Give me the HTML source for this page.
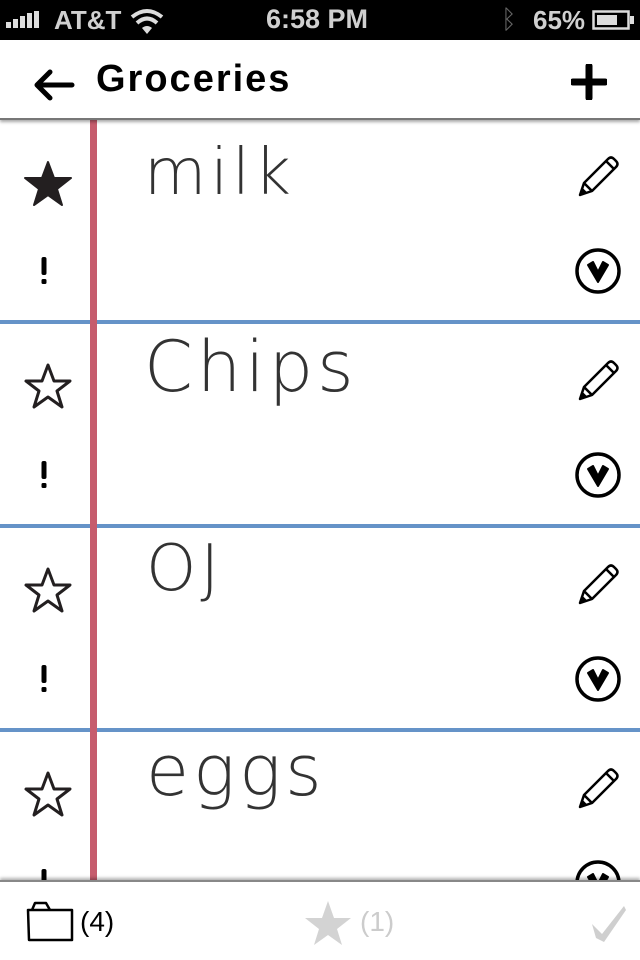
<!DOCTYPE html>
<html><head><meta charset="utf-8"><style>
*{margin:0;padding:0;box-sizing:border-box}
body{width:640px;height:960px;overflow:hidden;background:#fff;position:relative;font-family:"Liberation Sans",sans-serif}
.sb{position:absolute;left:0;top:0;width:640px;height:40px;background:#000;color:#d0d0d0;font-weight:bold;font-size:25px}
.hdr{position:absolute;left:0;top:40px;width:640px;height:80px;background:#fff;border-bottom:2px solid #777;box-shadow:0 2px 3px rgba(0,0,0,.35);z-index:3}
.red{position:absolute;left:90px;top:120px;width:7px;height:760px;background:#c65c6d;z-index:2}
.blue{position:absolute;left:0;width:640px;height:4px;background:#6593c8}
.hw{position:absolute;font-family:"DejaVu Sans",sans-serif;font-weight:200;color:#333;font-size:64px;letter-spacing:4px}
.ft{position:absolute;left:0;top:880px;width:640px;height:80px;background:#fff;border-top:2px solid #888;box-shadow:0 -2px 3px rgba(0,0,0,.3);z-index:4}
svg{position:absolute}
</style></head><body>
<div class="sb">
 <svg style="left:6px;top:11px" width="42" height="18"><rect x="0" y="11" width="5" height="6" fill="#ddd"/><rect x="7" y="8" width="5" height="9" fill="#ddd"/><rect x="14" y="5" width="5" height="12" fill="#ddd"/><rect x="21" y="2" width="5" height="15" fill="#ddd"/><rect x="28" y="0" width="5" height="17" fill="#ddd"/></svg>
 <div style="position:absolute;left:54px;top:5px;font-size:26px">AT&amp;T</div>
 <svg style="left:130px;top:8px" width="34" height="26"><path d="M2 9 Q17 -3 32 9" stroke="#ddd" stroke-width="4" fill="none"/><path d="M7 15 Q17 6 27 15" stroke="#ddd" stroke-width="4" fill="none"/><path d="M12 20 L17 26 L22 20 Q17 16 12 20Z" fill="#ddd"/></svg>
 <div style="position:absolute;left:266px;top:4px;font-size:27px">6:58 PM</div>
 <div style="position:absolute;left:501px;top:4px;color:#666;font-size:26px;font-weight:normal">ᛒ</div>
 <div style="position:absolute;left:533px;top:5px;font-size:26px">65%</div>
 <svg style="left:592px;top:10px" width="44" height="20"><rect x="1.5" y="1.5" width="35" height="17" fill="none" stroke="#ddd" stroke-width="2.5"/><rect x="5" y="5" width="20" height="10" fill="#ddd"/><rect x="38" y="6" width="4" height="8" fill="#ddd"/></svg>
</div>
<div class="hdr">
 <svg style="left:32px;top:28px" width="44" height="34"><path d="M40 17 L5 17 M18 4 L5 17 L18 30" stroke="#000" stroke-width="5" fill="none" stroke-linecap="round" stroke-linejoin="round"/></svg>
 <div style="position:absolute;left:96px;top:18px;font-size:38px;font-weight:bold;letter-spacing:2px">Groceries</div>
 <svg style="left:571px;top:24px" width="36" height="36"><path d="M18 2 V34 M2 18 H34" stroke="#000" stroke-width="7" stroke-linecap="round"/></svg>
</div>
<div class="red"></div>
<div class="blue" style="top:320px"></div>
<div class="blue" style="top:524px"></div>
<div class="blue" style="top:728px"></div>

<div class="hw" style="left:144px;top:136px">milk</div>
<div class="hw" style="left:144px;top:326px;font-size:70px">Chips</div>
<div class="hw" style="left:146px;top:532px">OJ</div>
<div class="hw" style="left:146px;top:730px;font-size:70px">eggs</div>

<svg width="640" height="960" style="left:0;top:0;z-index:1">
 <defs>
  <g id="pen"><path d="M2 40 L6 28 L30 4 Q33 1 36 4 L38 6 Q41 9 38 12 L14 36 Z M6 28 L14 36 M28 6 L36 14 M4 34 L8 38" fill="none" stroke="#000" stroke-width="2.5" stroke-linejoin="round"/><path d="M2 40 L4 34 L8 38Z" fill="#000"/></g>
  <g id="chev"><circle cx="0" cy="0" r="21" fill="none" stroke="#000" stroke-width="3.5"/><path d="M-10 -6 L0 11 L10 -6 L5 -9 L0 1 L-5 -9Z" fill="#000" stroke="#000" stroke-width="2" stroke-linejoin="round"/></g>
  <g id="bang"><rect x="-2.5" y="-13" width="5" height="18" rx="2" fill="#000"/><rect x="-2.5" y="9" width="5" height="5" rx="1.5" fill="#000"/></g>
 </defs>
 <path d="M48 162 L54 178 L71 178 L57 189 L62 205 L48 195 L34 205 L39 189 L25 178 L42 178Z" fill="#231f20" stroke="#231f20" stroke-width="2" stroke-linejoin="round"/>
 <g fill="none" stroke="#231f20" stroke-width="3" stroke-linejoin="round">
  <path d="M48 365 L54 381 L70 381 L57 391 L62 407 L48 397 L34 407 L39 391 L26 381 L42 381Z"/>
  <path d="M48 569 L54 585 L70 585 L57 595 L62 611 L48 601 L34 611 L39 595 L26 585 L42 585Z"/>
  <path d="M48 773 L54 789 L70 789 L57 799 L62 815 L48 805 L34 815 L39 799 L26 789 L42 789Z"/>
 </g>
 <use href="#bang" x="44" y="270"/><use href="#bang" x="44" y="474"/><use href="#bang" x="44" y="678"/><use href="#bang" x="44" y="882"/>
 <use href="#pen" x="578" y="155"/><use href="#pen" x="578" y="359"/><use href="#pen" x="578" y="563"/><use href="#pen" x="578" y="767"/>
 <use href="#chev" x="598" y="271"/><use href="#chev" x="598" y="475"/><use href="#chev" x="598" y="679"/><use href="#chev" x="598" y="883"/>
</svg>

<div class="ft">
 <svg style="left:26px;top:18px" width="48" height="42"><path d="M2 10 L46 10 L46 40 L3 40 Z M6 10 L9 3 L20 3 L24 10" fill="none" stroke="#000" stroke-width="2.5" stroke-linejoin="round"/></svg>
 <div style="position:absolute;left:80px;top:24px;font-size:28px;color:#000">(4)</div>
 <svg style="left:304px;top:18px" width="48" height="46"><path d="M24 1 L30 18 L47 18 L33 29 L38 45 L24 35 L10 45 L15 29 L1 18 L18 18Z" fill="#d3d3d3"/></svg>
 <div style="position:absolute;left:360px;top:24px;font-size:28px;color:#ccc">(1)</div>
 <svg style="left:588px;top:22px" width="40" height="40"><path d="M4 20 L14 30 L36 2 L38 6 L16 38 L8 34 Z" fill="#cfcfcf"/></svg>
</div>
</body></html>
